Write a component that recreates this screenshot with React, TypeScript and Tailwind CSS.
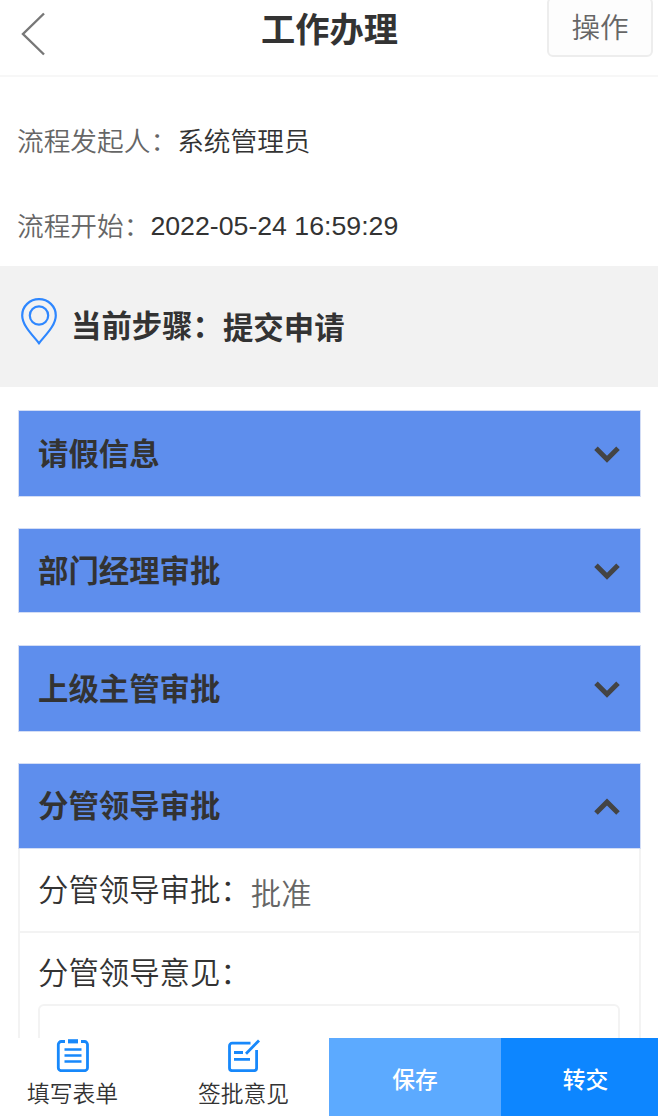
import React from "react";

function BackIcon() {
  return (
    <svg className="block" width="26" height="44" viewBox="0 0 26 44" fill="none" stroke="#777" strokeWidth="2.4">
      <path d="M24 1.500 3 22 24 42.500" />
    </svg>
  );
}

function PinIcon() {
  return (
    <svg className="block" width="38" height="48" viewBox="0 0 38 48" fill="none" stroke="#2e87ff" strokeWidth="2.2">
      <path d="M19 45.200C13 37.500 2.200 27.500 2.200 17.400a16.800 16.300 0 0 1 33.600 0C35.800 27.500 25 37.500 19 45.200Z" />
      <circle cx="19" cy="17.500" r="9.200" />
    </svg>
  );
}

function Chevron({ open }: { open?: boolean }) {
  return (
    <svg className="block" width="28" height="20" viewBox="0 0 28 20" fill="none" stroke="#444" strokeWidth="5">
      <path d={open ? "M3 17 14 6 25 17" : "M3 4.200 14 15.200 25 4.200"} />
    </svg>
  );
}

function FormIcon() {
  return (
    <svg className="block" width="34" height="34" viewBox="0 0 34 34" fill="none" stroke="#1788fb" strokeWidth="2.8">
      <path d="M9 3.500H5.300a3 3 0 0 0-3 3v23.200a3 3 0 0 0 3 3h23.200a3 3 0 0 0 3-3V6.500a3 3 0 0 0-3-3H25" />
      <path d="M12 3.300H22" strokeWidth="4.200" />
      <path d="M8.500 11.500H25.500M8.500 17.500H25.500M8.500 23.500H25.500" strokeWidth="2.500" />
    </svg>
  );
}

function SignIcon() {
  return (
    <svg className="block" width="34" height="34" viewBox="0 0 34 34" fill="none" stroke="#1788fb" strokeWidth="2.8">
      <path d="M23.500 5.200H5.200a2.700 2.700 0 0 0-2.700 2.700v22.100a2.700 2.700 0 0 0 2.700 2.700h21.700a2.700 2.700 0 0 0 2.700-2.700V12" />
      <path d="M32 2.500 19 15.800" />
      <path d="M7 14.500H16M7 21.300H23" />
    </svg>
  );
}

function Panel({ title, open, className, children }: { title: string; open?: boolean; className: string; children?: React.ReactNode }) {
  return (
    <section>
      <div className={`flex items-center justify-between border border-[#d3ddf5] bg-[#5e8eed] pr-[19px] pl-[19px] ${className}`}>
        <h2 className="text-[30.4px] leading-10 font-bold text-[#333]">{title}</h2>
        <Chevron open={open} />
      </div>
      {children}
    </section>
  );
}

export default function App() {
  return (
    <div className="flex h-[1116px] w-[658px] flex-col overflow-hidden bg-white font-['Liberation_Sans','Noto_Sans_CJK_SC',sans-serif] whitespace-nowrap text-[#333]">
      <header className="flex h-[77px] shrink-0 items-start justify-between border-b-2 border-[#f7f7f7] pr-[5px] pl-5">
        <button className="w-[90px] pt-3">
          <BackIcon />
        </button>
        <h1 className="pt-[9px] pl-[2px] text-[34.2px] leading-[42px] font-bold">工作办理</h1>
        <button className="-mt-[3px] h-[60px] w-[106px] rounded-md border-2 border-[#ededed] bg-[#fdfdfd] pt-[2px] text-[28.6px] font-[350] text-[#666]">操作</button>
      </header>
      <main className="min-h-0 flex-1 overflow-hidden">
        <dl className="flex h-[189px] flex-col gap-[45px] pt-[45px] pl-[17px] text-[26.7px] leading-10 font-[350]">
          <div className="flex">
            <dt className="text-[#666]">流程发起人：</dt>
            <dd className="text-[#333]">系统管理员</dd>
          </div>
          <div className="flex">
            <dt className="text-[#666]">流程开始：</dt>
            <dd className="-mt-px text-[#333]">2022-05-24 16:59:29</dd>
          </div>
        </dl>
        <div className="flex h-[121px] items-start bg-[#f2f2f2] pt-8 pl-5 text-[30.4px] leading-10 font-bold">
          <PinIcon />
          <span className="pt-2 pl-[13px]">当前步骤：</span>
          <span className="pt-[10px]">提交申请</span>
        </div>
        <div className="flex flex-col pt-[23px] pr-[17px] pl-[18px]">
          <Panel title="请假信息" className="mb-[31px] h-[87px]" />
          <Panel title="部门经理审批" className="mb-8 h-[85px]" />
          <Panel title="上级主管审批" className="mb-[31px] h-[87px]" />
          <Panel title="分管领导审批" open className="h-[86px]">
            <div className="h-[220px] border-x-2 border-[#f3f3f3] text-[30.4px] leading-10 font-[350]">
              <div className="flex h-[84px] border-b-2 border-[#f3f3f3] pl-[18px]">
                <span className="pt-[21px] text-[#333]">分管领导审批：</span>
                <span className="pt-[25px] text-[#666]">批准</span>
              </div>
              <div className="pt-5 pr-[19px] pl-[18px]">
                <div className="text-[#333]">分管领导意见：</div>
                <div className="mt-[11px] h-[100px] rounded-md border-2 border-[#f3f3f3]" />
              </div>
            </div>
          </Panel>
        </div>
      </main>
      <footer className="-ml-[13px] flex h-[78px] shrink-0 bg-white text-[22.8px] leading-8">
        <button className="flex w-[171px] shrink-0 flex-col items-center">
          <FormIcon />
          <span className="mt-[6px] font-[350]">填写表单</span>
        </button>
        <button className="flex w-[171px] shrink-0 flex-col items-center">
          <SignIcon />
          <span className="mt-[6px] font-[350]">签批意见</span>
        </button>
        <button className="w-[172px] shrink-0 bg-[#5caaff] pt-[5px] font-medium text-white">保存</button>
        <button className="w-[169px] shrink-0 bg-[#0d86ff] pt-[5px] font-medium text-white">转交</button>
      </footer>
    </div>
  );
}
